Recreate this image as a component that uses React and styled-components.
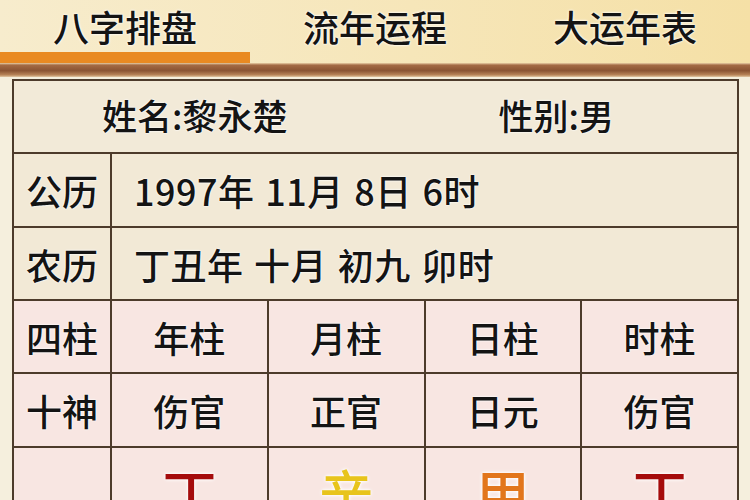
import React from 'react';
import styled, { createGlobalStyle } from 'styled-components';

const GlobalStyle = createGlobalStyle`
  html, body {
    margin: 0;
    padding: 0;
    background: #f5efdd;
  }
  body {
    font-family: "Noto Sans CJK SC", "Noto Sans", sans-serif;
    color: #141414;
  }
`;

const Page = styled.div`
  width: 750px;
  height: 500px;
  overflow: hidden;
`;

const TabBar = styled.div`
  display: grid;
  grid-template-columns: repeat(3, 1fr);
  background: linear-gradient(90deg, #f7eccd 0%, #f6e6b9 55%, #f5e0a6 100%);
`;

const Tab = styled.div`
  text-align: center;
  font-size: 36px;
  line-height: 52px;
  height: 52px;
  font-weight: 500;
  text-shadow: 0 0 2px #fff, 0 0 3px #fff;
  border-bottom: 11px solid ${(p) => (p.$active ? '#e98a22' : 'transparent')};
`;

const Band = styled.div`
  height: 14px;
  background: linear-gradient(180deg, #e9cfa6 0%, #a46b45 15%, #8a5433 55%, #b88458 85%, #e2c8a4 100%);
`;

const Frame = styled.div`
  padding: 2px 11px 0 12px;
`;

const Table = styled.div`
  display: grid;
  grid-template-columns: 98px repeat(4, 1fr);
  border-top: 2px solid #4d3b2b;
  border-left: 2px solid #4d3b2b;
  background: #f1e8d4;
`;

const Cell = styled.div`
  display: flex;
  align-items: center;
  justify-content: ${(p) => (p.$left ? 'flex-start' : 'center')};
  padding-left: ${(p) => (p.$left ? '22px' : '0')};
  grid-column: span ${(p) => p.$span || 1};
  height: ${(p) => p.$h || 71}px;
  border-right: 2px solid #4d3b2b;
  border-bottom: 2px solid #4d3b2b;
  background: ${(p) => (p.$pink ? '#f8e6e2' : '#f2e9d6')};
  font-size: 36px;
  font-weight: 500;
  text-shadow: 0 0 2px #fff, 0 0 2px #fff;
  white-space: pre;
`;

const Wide = styled.span`
  letter-spacing: 0.5px;
  word-spacing: 2px;
`;

const HalfRow = styled.div`
  grid-column: span 5;
  display: grid;
  grid-template-columns: 1fr 1fr;
  height: 71px;
  border-right: 2px solid #4d3b2b;
  border-bottom: 2px solid #4d3b2b;
  background: #f2ead8;
`;

const Half = styled.div`
  display: flex;
  align-items: center;
  justify-content: center;
  font-size: 35px;
  font-weight: 500;
  padding-bottom: 4px;
  text-shadow: 0 0 2px #fff, 0 0 2px #fff;
`;

const Stem = styled(Cell)`
  align-items: flex-start;
  padding-top: 13px;
  height: 90px;
  box-sizing: border-box;
  font-size: 54px;
  line-height: 1.2;
  color: ${(p) => p.$color};
  text-shadow: 0 0 3px #fff, 0 0 4px #fff;
`;

const tabs = ['八字排盘', '流年运程', '大运年表'];
const pillars = ['年柱', '月柱', '日柱', '时柱'];
const gods = ['伤官', '正官', '日元', '伤官'];
const stems = [
  { ch: '丁', color: '#a50c0c' },
  { ch: '辛', color: '#e8c41c' },
  { ch: '甲', color: '#e2761c' },
  { ch: '丁', color: '#a50c0c' },
];

export default function App() {
  return (
    <Page>
      <GlobalStyle />
      <TabBar>
        {tabs.map((t, i) => (
          <Tab key={t} $active={i === 0}>{t}</Tab>
        ))}
      </TabBar>
      <Band />
      <Frame>
        <Table>
          <HalfRow>
            <Half>姓名:黎永楚</Half>
            <Half>性别:男</Half>
          </HalfRow>

          <Cell $h={72}>公历</Cell>
          <Cell $span={4} $left $h={72}><Wide>1997年 11月 8日 6时</Wide></Cell>

          <Cell>农历</Cell>
          <Cell $span={4} $left><Wide>丁丑年 十月 初九 卯时</Wide></Cell>

          <Cell $pink>四柱</Cell>
          {pillars.map((p, i) => (
            <Cell key={i} $pink>{p}</Cell>
          ))}

          <Cell $pink $h={72}>十神</Cell>
          {gods.map((g, i) => (
            <Cell key={i} $pink $h={72}>{g}</Cell>
          ))}

          <Stem $pink />
          {stems.map((s, i) => (
            <Stem key={i} $pink $color={s.color}>{s.ch}</Stem>
          ))}
        </Table>
      </Frame>
    </Page>
  );
}
